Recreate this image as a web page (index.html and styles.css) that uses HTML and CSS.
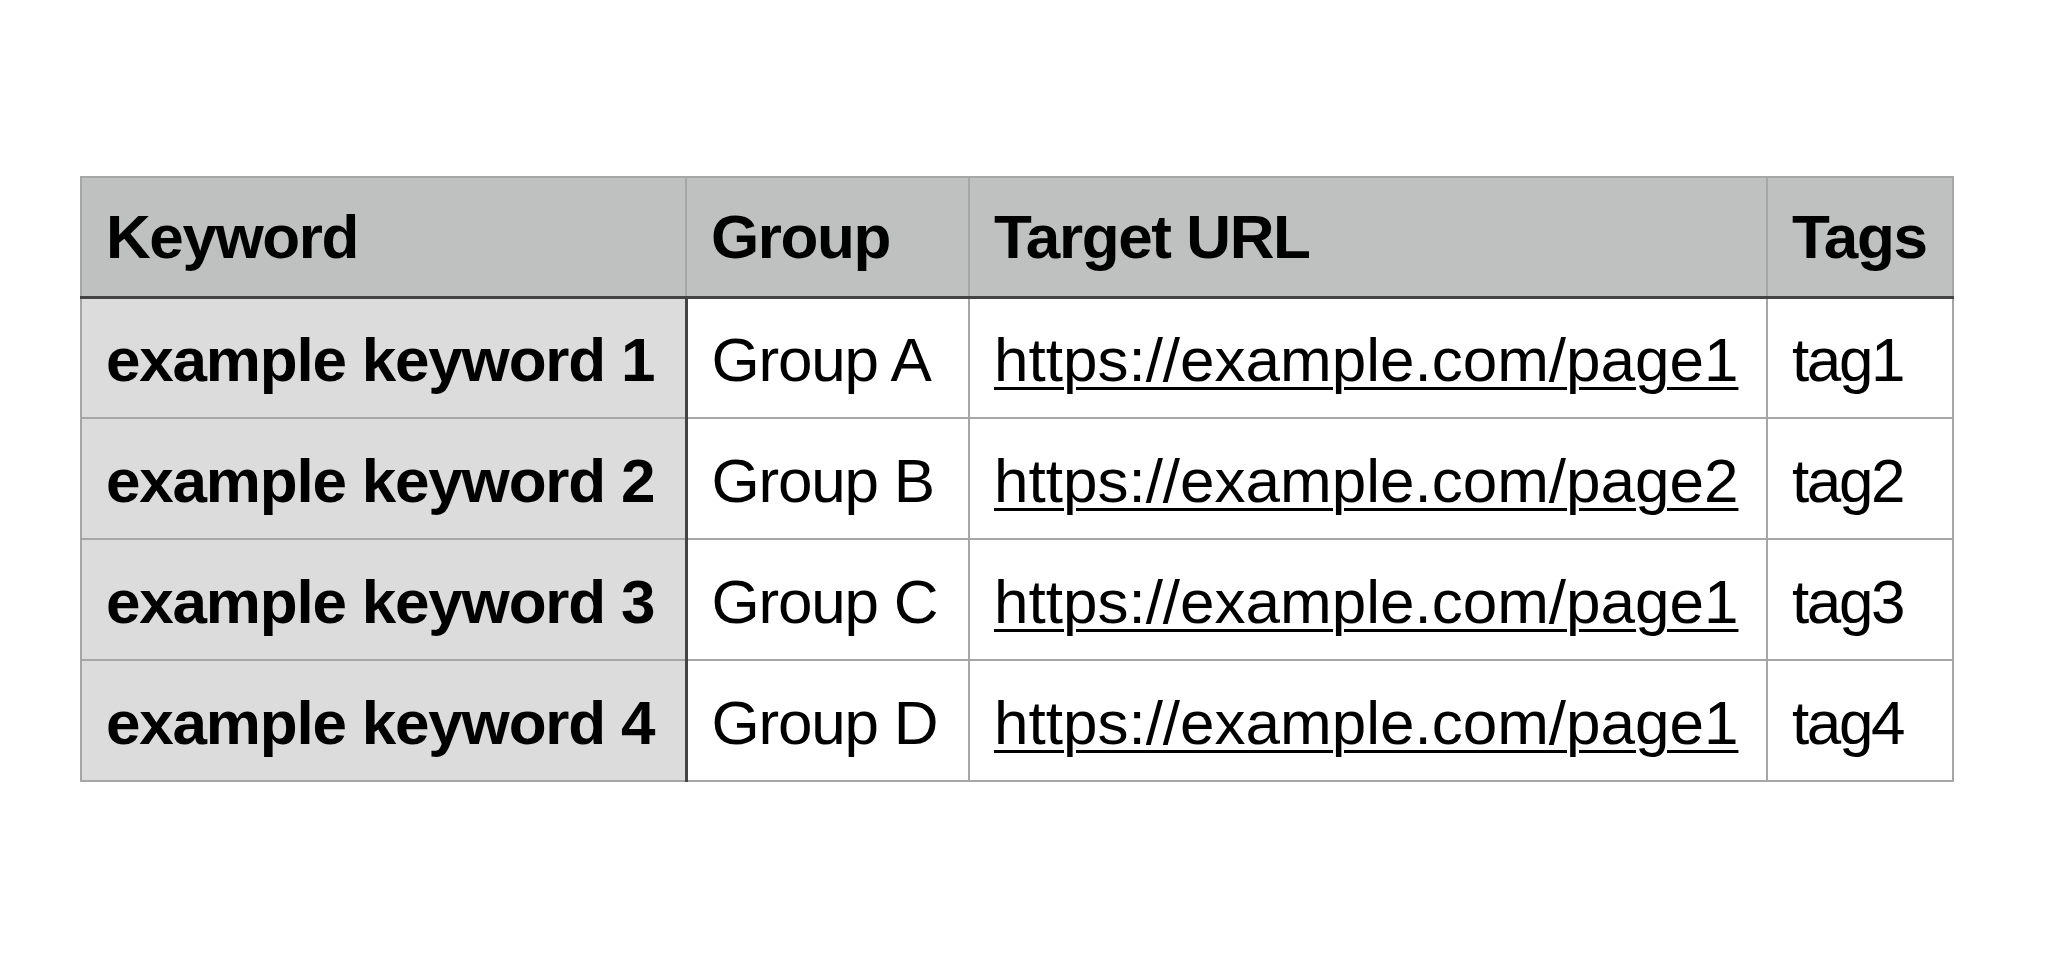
FILE: index.html
```html
<!DOCTYPE html>
<html lang="en">
<head>
<meta charset="utf-8">
<title>Keywords</title>
<link rel="stylesheet" href="styles.css">
</head>
<body>
<main class="page">
  <table class="kw-table">
    <colgroup>
      <col class="col-keyword">
      <col class="col-group">
      <col class="col-url">
      <col class="col-tags">
    </colgroup>
    <thead>
      <tr>
        <th class="head-keyword">Keyword</th>
        <th>Group</th>
        <th>Target URL</th>
        <th>Tags</th>
      </tr>
    </thead>
    <tbody>
      <tr>
        <th class="kw" scope="row">example keyword 1</th>
        <td class="grp">Group A</td>
        <td class="url"><a href="#">https://example.com/page1</a></td>
        <td class="tag">tag1</td>
      </tr>
      <tr>
        <th class="kw" scope="row">example keyword 2</th>
        <td class="grp">Group B</td>
        <td class="url"><a href="#">https://example.com/page2</a></td>
        <td class="tag">tag2</td>
      </tr>
      <tr>
        <th class="kw" scope="row">example keyword 3</th>
        <td class="grp">Group C</td>
        <td class="url"><a href="#">https://example.com/page1</a></td>
        <td class="tag">tag3</td>
      </tr>
      <tr>
        <th class="kw" scope="row">example keyword 4</th>
        <td class="grp">Group D</td>
        <td class="url"><a href="#">https://example.com/page1</a></td>
        <td class="tag">tag4</td>
      </tr>
    </tbody>
  </table>
</main>
</body>
</html>
```
FILE: styles.css
```css
html, body {
  margin: 0;
  padding: 0;
  background: #ffffff;
}

body {
  font-family: "Liberation Sans", Arial, Helvetica, sans-serif;
  color: #000000;
}

.page {
  padding: 176px 0 0 80px;
}

.kw-table {
  border-collapse: collapse;
  table-layout: fixed;
  width: 1872px;
  border: 2px solid #a6a6a6;
  font-size: 62px;
  line-height: 71px;
}

.col-keyword { width: 605px; }
.col-group { width: 283px; }
.col-url { width: 798px; }
.col-tags { width: 186px; }

.kw-table th,
.kw-table td {
  border: 2px solid #a6a6a6;
  padding: 0 0 0 24px;
  box-sizing: border-box;
  text-align: left;
  vertical-align: middle;
  white-space: nowrap;
}

.kw-table thead th {
  height: 120px;
  background: #bfc1c0;
  font-weight: bold;
  letter-spacing: -1.4px;
  border-bottom: 3px solid #444444;
}

.kw-table tbody th,
.kw-table tbody td {
  height: 121px;
  padding-top: 3px;
}

.kw-table tbody .kw {
  background: #dcdcdc;
  font-weight: bold;
  letter-spacing: -1.2px;
  border-right: 3px solid #444444;
}

.kw-table .grp {
  letter-spacing: -1.2px;
}

.kw-table .tag {
  letter-spacing: -2.4px;
}

.url a {
  color: #000000;
  text-decoration: underline;
  text-decoration-thickness: 3px;
  text-underline-offset: 6px;
}
```
